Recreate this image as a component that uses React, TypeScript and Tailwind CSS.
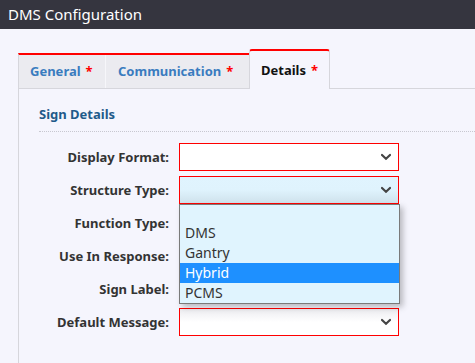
import React from "react";

const font = { fontFamily: '"Noto Sans", "Open Sans", sans-serif' };

function Chevron() {
  return (
    <svg width="10" height="7" viewBox="0 0 10 7" className="absolute right-[7px] top-1/2 -translate-y-1/2">
      <path d="M1 1.5 L5 5.2 L9 1.5" fill="none" stroke="#444" strokeWidth="2.2" strokeLinecap="square" />
    </svg>
  );
}

function Select({ variant = "plain", children }: { variant?: "plain" | "focus" | "shade"; children?: React.ReactNode }) {
  const bg =
    variant === "focus"
      ? "bg-gradient-to-b from-[#e0f4fe] via-[#dff3fd] to-[#cfe2ec]"
      : variant === "shade"
      ? "bg-gradient-to-b from-[#ececf0] via-white to-white"
      : "bg-white";
  return (
    <div className={`relative h-[28px] w-[220px] border border-[#ff0000] ${bg}`}>
      <Chevron />
      {children}
    </div>
  );
}

function Row({ label, children }: { label: string; children: React.ReactNode }) {
  return (
    <div className="flex items-center h-[28px]">
      <div className="w-[150px] text-right text-[13px] font-bold text-[#333] pr-0 leading-none">{label}</div>
      <div className="ml-[10px]">{children}</div>
    </div>
  );
}

export default function App() {
  const options = ["DMS", "Gantry", "Hybrid", "PCMS"];
  return (
    <div className="w-[475px] h-[363px] overflow-hidden bg-[#f5f5fd] flex flex-col" style={font}>
      <div className="h-[29px] shrink-0 bg-[#35353f] text-white text-[15px] flex items-center pl-[8px]">
        DMS Configuration
      </div>
      <div className="flex-1 pl-[18px] pt-[20px] flex flex-col">
        <div className="flex items-end h-[40px] border-b border-[#d6d6dc]">
          <div className="flex h-[35px] border-t-2 border-[#ff0000] bg-[#ebebf0] border-l border-l-[#d6d6dc]">
            <div className="w-[87px] flex items-center pl-[11px] text-[13px] font-bold text-[#3a7cbf] border-r border-r-[#f6f6fa]">
              General <span className="text-[#ff0000] ml-[5px]">*</span>
            </div>
            <div className="w-[143px] flex items-center pl-[12px] text-[13px] font-bold text-[#3a7cbf]">
              Communication <span className="text-[#ff0000] ml-[5px]">*</span>
            </div>
          </div>
          <div className="relative -mb-px h-[40px] w-[81px] rounded-t-[3px] border-t-2 border-x border-[#ff0000] border-x-[#d6d6dc] bg-[#f5f5fd] flex items-center pl-[11px] pt-[2px] text-[13px] font-bold text-[#111]">
            Details <span className="text-[#ff0000] ml-[5px]">*</span>
          </div>
        </div>
        <div className="flex-1 border-l border-[#d6d6dc]">
          <div className="ml-[20px] pt-[16px] pb-[8px] border-b border-dotted border-[#c8c8d0]">
            <div className="text-[13px] font-bold text-[#1f5a8a] leading-[18px]">Sign Details</div>
          </div>
          <div className="flex flex-col gap-[5px] pt-[11px]">
            <Row label="Display Format:">
              <Select />
            </Row>
            <Row label="Structure Type:">
              <Select variant="focus">
                <div className="absolute left-[-1px] top-[27px] z-10 w-[221px] border border-[#7a7a7a] bg-[#e0f4fe] shadow-[3px_3px_6px_rgba(0,0,0,0.25)] text-[14px] text-[#333]">
                  <div className="h-[18px]" />
                  {options.map((o) => (
                    <div
                      key={o}
                      className={`h-[20px] leading-[20px] pl-[5px] ${o === "Hybrid" ? "bg-[#1e90ff] text-white" : ""}`}
                    >
                      {o}
                    </div>
                  ))}
                </div>
              </Select>
            </Row>
            <Row label="Function Type:">
              <Select />
            </Row>
            <Row label="Use In Response:">
              <Select />
            </Row>
            <Row label="Sign Label:">
              <Select />
            </Row>
            <Row label="Default Message:">
              <Select variant="shade" />
            </Row>
          </div>
        </div>
      </div>
    </div>
  );
}
